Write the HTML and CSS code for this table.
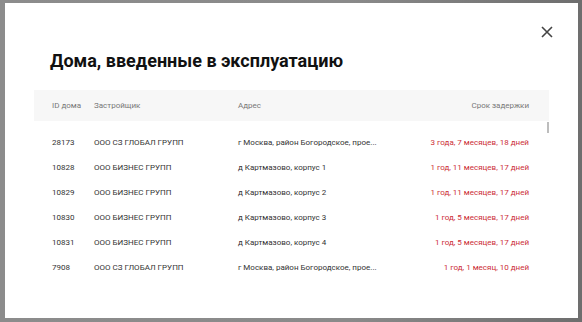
FILE: index.html
```html
<!DOCTYPE html>
<html lang="ru">
<head>
<meta charset="utf-8">
<link rel="stylesheet" href="styles.css">
</head>
<body>
<div class="modal">
  <button class="close" aria-label="Закрыть">
    <svg width="12" height="12" viewBox="0 0 12 12"><path d="M1 1L11 11M11 1L1 11" stroke="#444" stroke-width="1.6" fill="none"/></svg>
  </button>
  <h1 class="title">Дома, введенные в эксплуатацию</h1>
  <div class="table">
    <div class="row head">
      <div class="c-id">ID дома</div>
      <div class="c-dev">Застройщик</div>
      <div class="c-addr">Адрес</div>
      <div class="c-delay">Срок задержки</div>
    </div>
    <div class="body">
      <div class="thumb"></div>
      <div class="row">
        <div class="c-id">28173</div><div class="c-dev">ООО СЗ ГЛОБАЛ ГРУПП</div><div class="c-addr">г Москва, район Богородское, прое...</div><div class="c-delay red">3 года, 7 месяцев, 18 дней</div>
      </div>
      <div class="row">
        <div class="c-id">10828</div><div class="c-dev">ООО БИЗНЕС ГРУПП</div><div class="c-addr">д Картмазово, корпус 1</div><div class="c-delay red">1 год, 11 месяцев, 17 дней</div>
      </div>
      <div class="row">
        <div class="c-id">10829</div><div class="c-dev">ООО БИЗНЕС ГРУПП</div><div class="c-addr">д Картмазово, корпус 2</div><div class="c-delay red">1 год, 11 месяцев, 17 дней</div>
      </div>
      <div class="row">
        <div class="c-id">10830</div><div class="c-dev">ООО БИЗНЕС ГРУПП</div><div class="c-addr">д Картмазово, корпус 3</div><div class="c-delay red">1 год, 5 месяцев, 17 дней</div>
      </div>
      <div class="row">
        <div class="c-id">10831</div><div class="c-dev">ООО БИЗНЕС ГРУПП</div><div class="c-addr">д Картмазово, корпус 4</div><div class="c-delay red">1 год, 5 месяцев, 17 дней</div>
      </div>
      <div class="row">
        <div class="c-id">7908</div><div class="c-dev">ООО СЗ ГЛОБАЛ ГРУПП</div><div class="c-addr">г Москва, район Богородское, прое...</div><div class="c-delay red">1 год, 1 месяц, 10 дней</div>
      </div>
    </div>
  </div>
</div>
</body>
</html>
```
FILE: styles.css
```css
html, body {
  margin: 0;
  padding: 0;
}
body {
  width: 582px;
  height: 322px;
  overflow: hidden;
  background: linear-gradient(90deg, #8c8c8c 0%, #8a8a8a 60%, #6e6e6e 100%);
  font-family: Roboto, "Noto Sans", sans-serif;
  padding: 3px 0 0 5px;
  box-sizing: border-box;
}
.modal {
  position: relative;
  width: 573px;
  height: 315px;
  background: #fff;
  box-sizing: border-box;
  padding: 46px 29px 0 29px;
}
.close {
  position: absolute;
  top: 23px;
  right: 25px;
  border: 0;
  background: none;
  padding: 0;
  width: 12px;
  height: 12px;
  display: flex;
}
.title {
  margin: 0 0 17px 16px;
  font-size: 18px;
  line-height: 24px;
  font-weight: 700;
  color: #111;
}
.table {
  display: flex;
  flex-direction: column;
}
.row {
  display: flex;
  align-items: center;
  height: 25px;
  font-size: 8px;
  color: #333;
  padding: 0 20px 0 18px;
}
.row.head {
  height: 31px;
  background: #f7f7f7;
  color: #777;
}
.body {
  position: relative;
  padding-top: 9px;
}
.thumb {
  position: absolute;
  right: 0;
  top: 1px;
  width: 2px;
  height: 11px;
  background: #bdbdbd;
}
.c-id { width: 42px; }
.c-dev { width: 144px; }
.c-addr { flex: 1; }
.c-delay { text-align: right; }
.red { color: #cc2e36; }
```
